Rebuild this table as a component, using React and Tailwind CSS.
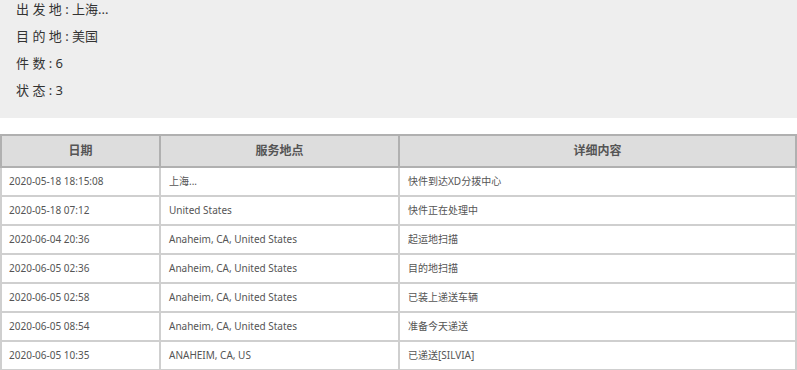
export default function App() {
  const rows = [
    ["2020-05-18 18:15:08", "上海...", "快件到达XD分拨中心"],
    ["2020-05-18 07:12", "United States", "快件正在处理中"],
    ["2020-06-04 20:36", "Anaheim, CA, United States", "起运地扫描"],
    ["2020-06-05 02:36", "Anaheim, CA, United States", "目的地扫描"],
    ["2020-06-05 02:58", "Anaheim, CA, United States", "已装上递送车辆"],
    ["2020-06-05 08:54", "Anaheim, CA, United States", "准备今天递送"],
    ["2020-06-05 10:35", "ANAHEIM, CA, US", "已递送[SILVIA]"],
  ];
  const font = { fontFamily: '"Noto Sans", "Noto Sans CJK SC", sans-serif' };
  return (
    <div className="w-[797px] h-[370px] overflow-hidden bg-white" style={font}>
      <div className="bg-[#eeeeee] h-[118px] pl-[16px] overflow-hidden text-[13px] text-[#333] leading-[27px]">
        <div className="mt-[-4px]">出 发 地 : 上海...</div>
        <div>目 的 地 : 美国</div>
        <div>件 数 : 6</div>
        <div>状 态 : 3</div>
      </div>
      <div className="h-[16px]" />
      <table className="w-[797px] border-collapse text-[10px] text-[#555] table-fixed">
        <colgroup>
          <col className="w-[159px]" />
          <col className="w-[239px]" />
          <col />
        </colgroup>
        <thead>
          <tr className="bg-[#dddddd] h-[32px]">
            <th className="border-2 border-[#b0b0b0] font-bold text-[12px] text-[#555] text-center">日期</th>
            <th className="border-2 border-[#b0b0b0] font-bold text-[12px] text-[#555] text-center">服务地点</th>
            <th className="border-2 border-[#b0b0b0] font-bold text-[12px] text-[#555] text-center">详细内容</th>
          </tr>
        </thead>
        <tbody>
          {rows.map((r, i) => (
            <tr key={i} className="h-[29px]">
              <td className="border-2 border-[#cfcfcf] pl-[7px]">{r[0]}</td>
              <td className="border-2 border-[#cfcfcf] pl-[8px]">{r[1]}</td>
              <td className="border-2 border-[#cfcfcf] pl-[8px]">{r[2]}</td>
            </tr>
          ))}
        </tbody>
      </table>
    </div>
  );
}
